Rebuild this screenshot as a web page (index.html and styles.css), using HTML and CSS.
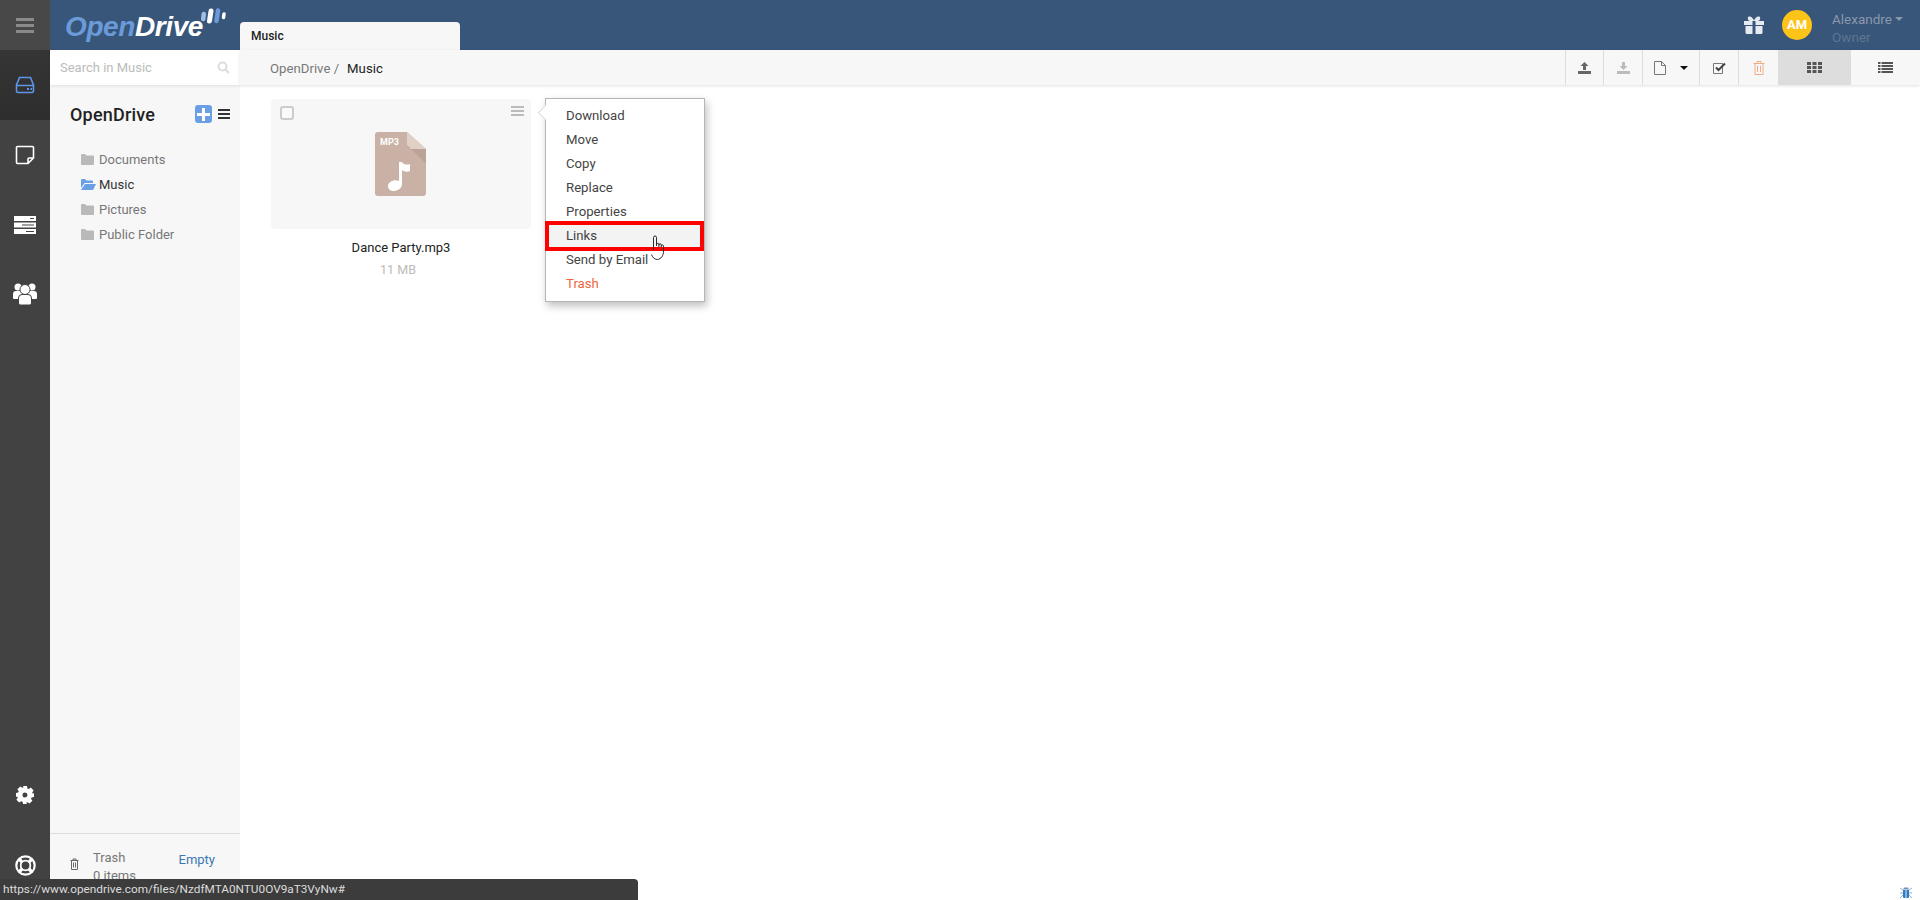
FILE: index.html
```html
<!DOCTYPE html>
<html lang="en">
<head>
    <meta charset="UTF-8">
    <meta name="viewport" content="width=device-width, initial-scale=1.0">
    <title>OpenDrive - Music</title>
    <link rel="stylesheet" href="styles.css">
</head>
<body>
<div class="app">

    <!-- left rail -->
    <nav class="rail">
        <div class="rail-top">
            <svg width="18" height="15" viewBox="0 0 18 15"><path fill="#8a8a8a" d="M0 0h18v3H0zM0 6h18v3H0zM0 12h18v3H0z"/></svg>
        </div>
        <div class="rail-item active">
            <svg width="20" height="18" viewBox="0 0 20 18" fill="none" stroke="#5f95e6" stroke-width="1.6"><path d="M4.500 1.500h11l3 7.500v6a1.500 1.500 0 0 1-1.500 1.500H3a1.500 1.500 0 0 1-1.500-1.500V9zM1.500 9.500h17"/><path stroke-width="2" d="M12 13h2M15.500 13h1.500"/></svg>
        </div>
        <div class="rail-item">
            <svg width="20" height="20" viewBox="0 0 20 20" fill="none" stroke="#fff" stroke-width="1.600"><path d="M13 18.500H2.500a1 1 0 0 1-1-1V2.500a1 1 0 0 1 1-1h15a1 1 0 0 1 1 1V13zM13 18.500V14a1 1 0 0 1 1-1h4.500"/></svg>
        </div>
        <div class="rail-item">
            <svg width="22" height="18" viewBox="0 0 22 18"><path fill="#fff" fill-rule="evenodd" d="M0 0h22v5H0zM16 2v1h4V2zM0 6.500h22v5H0zM8 8.500v1h12v-1zM0 13h22v5H0zM12 15v1h8v-1z"/></svg>
        </div>
        <div class="rail-item users-item">
            <svg width="24" height="22" viewBox="0 0 24 22" fill="#fff">
                <circle cx="5" cy="4" r="3.500"/><circle cx="19" cy="4" r="3.500"/>
                <path d="M0 11a3 3 0 0 1 3-3h18a3 3 0 0 1 3 3v4a1 1 0 0 1-1 1H1a1 1 0 0 1-1-1z"/>
                <circle cx="12" cy="6.500" r="5" stroke="#424242"/>
                <path stroke="#424242" d="M5.500 15a3.500 3.500 0 0 1 3.500-3.500h6a3.500 3.500 0 0 1 3.500 3.500v5a2 2 0 0 1-2 2h-9a2 2 0 0 1-2-2z"/>
            </svg>
        </div>
        <div class="rail-item rail-bottom">
            <svg width="18" height="18" viewBox="0 0 18 18"><path fill="#fff" fill-rule="evenodd" d="M7 0h4l.4 2.400 1.400.6 2-1.400 2.800 2.800-1.400 2 .6 1.400L18 7v4l-2.400.4-.6 1.400 1.400 2-2.800 2.800-2-1.400-1.400.6L11 18H7l-.4-2.200-1.400-.6-2 1.400-2.800-2.800 1.400-2-.6-1.400L0 11V7l2.200-.4.600-1.400-1.400-2 2.800-2.800 2 1.400 1.400-.6zM9 6.500a2.500 2.500 0 1 0 0 5 2.500 2.500 0 0 0 0-5z"/></svg>
        </div>
        <div class="rail-item">
            <svg width="21" height="21" viewBox="0 0 21 21" fill="none" stroke="#fff"><circle cx="10.500" cy="10.500" r="9.200" stroke-width="2.200"/><circle cx="10.500" cy="10.500" r="4.800" stroke-width="1.800"/><path stroke-width="3.200" d="M4 4l3.500 3.500M17 4l-3.500 3.500M4 17l3.500-3.500M17 17l-3.500-3.500"/></svg>
        </div>
    </nav>

    <!-- top bar -->
    <header class="topbar">
        <div class="logo">
            <span class="logo-open">Open</span><span class="logo-drive">Drive</span>
            <svg class="logo-bars" width="26" height="16" viewBox="0 0 26 16" fill="none" stroke-linecap="round">
                <path stroke="#9dbfe6" stroke-width="4.500" d="M3.200 11l.6-5"/>
                <path stroke="#fff" stroke-width="5" d="M9.500 13l1.500-10"/>
                <path stroke="#6a9bd8" stroke-width="4.500" d="M16.500 13L18 2.500"/>
                <path stroke="#fff" stroke-width="3.500" d="M23.500 9.500L24 6"/>
            </svg>
        </div>
        <div class="tab">Music</div>
        <div class="user-area">
            <svg class="gift" width="20" height="18" viewBox="0 0 20 18"><path fill="#e6ebf2" fill-rule="evenodd" d="M0 5h8.500v4H0zM11.500 5H20v4h-8.500zM1.500 10h7v8h-5.500a1.500 1.500 0 0 1-1.500-1.500zM11.500 10h7v6.500a1.500 1.500 0 0 1-1.500 1.500h-5.500zM5 .500C7 0 9 2 10 4.500 11 2 13 0 15 .500c2 .5 1.500 4-1 4.500H6C3.500 4.500 3 1 5 .500z"/></svg>
            <div class="avatar">AM</div>
            <div class="user-name">
                <div class="user-first">Alexandre<span class="caret-small"></span></div>
                <div class="user-role">Owner</div>
            </div>
        </div>
    </header>

    <!-- folder sidebar -->
    <aside class="sidebar">
        <div class="search">
            <span>Search in Music</span>
            <svg width="13" height="13" viewBox="0 0 13 13" fill="none" stroke="#ddd" stroke-width="2"><circle cx="5.500" cy="5.500" r="4"/><path d="M8.500 8.500l3.500 3.500"/></svg>
        </div>
        <div class="side-head">
            <span class="side-title">OpenDrive</span>
            <span class="add-btn">
                <svg width="13" height="13" viewBox="0 0 13 13"><path fill="#fff" d="M5 0h3v5h5v3H8v5H5V8H0V5h5z"/></svg>
            </span>
            <svg width="12" height="10" viewBox="0 0 12 10"><path fill="#333" d="M0 0h12v2H0zM0 4h12v2H0zM0 8h12v2H0z"/></svg>
        </div>
        <ul class="tree">
            <li><svg width="13" height="11" viewBox="0 0 13 11"><path fill="#b9b9b9" d="M0 1a1 1 0 0 1 1-1h3l1.500 1.500H12a1 1 0 0 1 1 1V10a1 1 0 0 1-1 1H1a1 1 0 0 1-1-1z"/></svg>Documents</li>
            <li class="open"><svg width="15" height="11" viewBox="0 0 15 11"><path fill="#6a9fe6" d="M0 1a1 1 0 0 1 1-1h3l1.500 1.500H11a1 1 0 0 1 1 1V4H3.500L0 9zM4 5h11l-3 6H0z"/></svg>Music</li>
            <li><svg width="13" height="11" viewBox="0 0 13 11"><path fill="#b9b9b9" d="M0 1a1 1 0 0 1 1-1h3l1.500 1.500H12a1 1 0 0 1 1 1V10a1 1 0 0 1-1 1H1a1 1 0 0 1-1-1z"/></svg>Pictures</li>
            <li><svg width="13" height="11" viewBox="0 0 13 11"><path fill="#b9b9b9" d="M0 1a1 1 0 0 1 1-1h3l1.500 1.500H12a1 1 0 0 1 1 1V10a1 1 0 0 1-1 1H1a1 1 0 0 1-1-1z"/></svg>Public Folder</li>
        </ul>
        <div class="side-foot">
            <svg width="9" height="12" viewBox="0 0 9 12" fill="none" stroke="#666"><path d="M.5 2.500h8M3 2.500V1h3v1.500M1.500 2.500v9h6v-9M3.500 4.500v5M5.500 4.500v5"/></svg>
            <div class="trash-info">
                <div>Trash</div>
                <div>0 items</div>
            </div>
            <a class="empty-link" href="#">Empty</a>
        </div>
    </aside>

    <!-- file area -->
    <main class="content">
        <div class="toolbar">
            <div class="crumbs"><span>OpenDrive /</span><b>Music</b></div>
            <div class="tools">
                <div class="tool t38"><svg width="13" height="12" viewBox="0 0 13 12"><path fill="#666" d="M6.500 0l4 4H8v4H5V4H2.500zM0 9h13v3H0z"/></svg></div>
                <div class="tool t39"><svg width="13" height="12" viewBox="0 0 13 12"><path fill="#bbb" d="M5 0h3v4h2.500l-4 4-4-4H5zM0 9h13v3H0z"/></svg></div>
                <div class="tool t57">
                    <svg width="12" height="14" viewBox="0 0 12 14" fill="none" stroke="#777"><path d="M.5.500h7l4 4v9H.5zM7.500.5v4h4"/></svg>
                    <span class="caret-black"></span>
                </div>
                <div class="tool t39"><svg width="13" height="12" viewBox="0 0 13 12" fill="none"><path stroke="#777" d="M.5 1.500h9v10h-9z"/><path stroke="#444" stroke-width="2" d="M3 5.500l2.500 2.500L12 1.500"/></svg></div>
                <div class="tool t40"><svg width="12" height="14" viewBox="0 0 12 14" fill="none" stroke="#f5ab84"><path d="M.5 2.500h11M4 2.500V.5h4v2M2 2.500v11h8v-11M4.500 5v6M7.500 5v6"/></svg></div>
                <div class="tool t72 on"><svg width="15" height="11" viewBox="0 0 15 11"><path fill="#555" d="M0 0h4v3H0zM5.500 0h4v3h-4zM11 0h4v3h-4zM0 4h4v3H0zM5.500 4h4v3h-4zM11 4h4v3h-4zM0 8h4v3H0zM5.500 8h4v3h-4zM11 8h4v3h-4z"/></svg></div>
                <div class="tool t70"><svg width="15" height="11" viewBox="0 0 15 11"><path fill="#555" d="M0 0h2.500v2H0zM3.500 0H15v2H3.500zM0 3h2.500v2H0zM3.500 3H15v2H3.500zM0 6h2.500v2H0zM3.500 6H15v2H3.500zM0 9h2.500v2H0zM3.500 9H15v2H3.500z"/></svg></div>
            </div>
        </div>

        <div class="files">
            <div class="file">
                <div class="thumb">
                    <span class="check"></span>
                    <svg class="thumb-menu" width="13" height="10" viewBox="0 0 13 10"><path fill="#bbb" d="M0 0h13v2H0zM0 4h13v2H0zM0 8h13v2H0z"/></svg>
                    <svg class="thumb-icon" width="51" height="64" viewBox="0 0 51 64">
                        <path fill="#c9b1a6" d="M3 0h29l19 17v44a3 3 0 0 1-3 3H3a3 3 0 0 1-3-3V3a3 3 0 0 1 3-3z"/>
                        <path fill="#e0d0c6" d="M32 0l19 17H36a4 4 0 0 1-4-4z"/>
                        <path fill="#bba398" d="M32 13a4 4 0 0 0 4 4h15v15z"/>
                        <path fill="#fff" d="M24 30h3c1 3 7 3 8 2v7c-2 1-6 1-8-1v14c0 4-4 7-8 7s-6-2-6-5c0-4 6-7 11-5z"/>
                        <text class="mp3-label" x="5" y="13">MP3</text>
                    </svg>
                </div>
                <div class="file-name">Dance Party.mp3</div>
                <div class="file-size">11 MB</div>
            </div>
        </div>

        <!-- context menu for the file -->
        <div class="menu">
            <ul>
                <li>Download</li>
                <li>Move</li>
                <li>Copy</li>
                <li>Replace</li>
                <li>Properties</li>
                <li class="hit">Links</li>
                <li>Send by Email</li>
                <li class="danger">Trash</li>
            </ul>
            <svg class="hand" width="15" height="25" viewBox="0 0 15 25" fill="none" stroke="#2a2a2a"><path d="M3.500 15V2.500a1.500 1.500 0 0 1 3 0V11M6.500 9.500a1.200 1.200 0 0 1 2.400 0V12M8.900 10a1.200 1.200 0 0 1 2.400 0V12M11.300 10.500a1.200 1.200 0 0 1 2.200.6V16c0 5-2.500 8-6 8.500-3 0-5-2-6-5"/></svg>
        </div>
    </main>
</div>

<div class="status-url">https://www.opendrive.com/files/NzdfMTA0NTU0OV9aT3VyNw#</div>
<svg class="bug" width="12" height="12" viewBox="0 0 12 12"><path fill="#2f7cc4" d="M3 4h6v7a1 1 0 0 1-1 1H4a1 1 0 0 1-1-1z"/><path fill="#6f93b5" d="M4 1.500h4L9 3.500H3z"/><path stroke="#8fb0d0" d="M0 2l3 2M12 2L9 4M0 7h3M12 7H9M0 12l3-3M12 12L9 9"/><path stroke="#dbe8f3" d="M6 4v8"/></svg>
</body>
</html>
```

FILE: styles.css
```css
* {
    box-sizing: border-box;
}

html, body {
    margin: 0;
    height: 100%;
    overflow: hidden;
}

body {
    font-family: Roboto, "Liberation Sans", sans-serif;
    font-size: 13px;
    color: #333;
    background-color: #fff;
}

.app {
    display: grid;
    grid-template-columns: 50px 190px 1fr;
    grid-template-rows: 50px 1fr;
    height: 900px;
}

/* left rail */
.rail {
    grid-row: 1 / 3;
    display: flex;
    flex-direction: column;
    background-color: #424242;
}

.rail-top {
    height: 50px;
    display: flex;
    align-items: center;
    justify-content: center;
    background-color: #484848;
}

.rail-item {
    height: 70px;
    flex-shrink: 0;
    display: flex;
    align-items: center;
    justify-content: center;
}

.rail-item.active {
    background: linear-gradient(#353535, #2e2e2e);
}

.users-item {
    padding-bottom: 2px;
}

.rail-bottom {
    margin-top: auto;
}

/* top bar */
.topbar {
    grid-column: 2 / 4;
    display: flex;
    align-items: flex-end;
    background-color: #38557a;
}

.logo {
    width: 190px;
    height: 50px;
    display: flex;
    align-items: center;
    padding: 4px 0 0 15px;
    font-family: "Liberation Sans", sans-serif;
    font-size: 28px;
    font-weight: bold;
    font-style: italic;
    letter-spacing: -0.4px;
}

.logo-open {
    color: #6a9bd8;
}

.logo-drive {
    color: #fff;
}

.logo-bars {
    flex-shrink: 0;
    margin: -22px 0 0 -3px;
}

.tab {
    width: 220px;
    height: 28px;
    padding: 7px 11px;
    font-size: 12px;
    font-weight: 500;
    color: #222;
    background-color: #f7f7f7;
    border-radius: 4px 4px 0 0;
}

.user-area {
    margin-left: auto;
    height: 50px;
    display: flex;
    align-items: center;
    width: 176px;
}

.avatar {
    width: 30px;
    height: 30px;
    margin-left: 18px;
    border-radius: 50%;
    background-color: #fcc419;
    color: #fff;
    font-weight: bold;
    font-size: 13px;
    line-height: 30px;
    text-align: center;
}

.user-name {
    margin: 6px 0 0 20px;
    font-size: 13.5px;
    line-height: 18px;
    white-space: nowrap;
}

.user-first {
    color: #8b98aa;
}

.user-role {
    color: #5f7591;
}

.caret-small {
    display: inline-block;
    margin-left: 3px;
    vertical-align: 3px;
    border: 4px solid transparent;
    border-top-color: #8b98aa;
    border-bottom-width: 0;
}

/* sidebar */
.sidebar {
    display: flex;
    flex-direction: column;
    background-color: #f7f7f7;
}

.search {
    height: 35px;
    display: flex;
    align-items: center;
    justify-content: space-between;
    padding: 0 10px;
    background-color: #fff;
    color: #bbb;
    box-shadow: 0 1px 3px rgba(0, 0, 0, 0.1);
}

.side-head {
    display: flex;
    align-items: center;
    margin-top: 20px;
    padding: 0 10px 0 20px;
    height: 18px;
}

.side-title {
    flex: 1;
    font-size: 18px;
    font-weight: 500;
    letter-spacing: 0.2px;
    color: #222;
}

.add-btn {
    width: 17px;
    height: 18px;
    margin-right: 6px;
    display: flex;
    align-items: center;
    justify-content: center;
    border-radius: 3px;
    background-color: #6a9fe6;
}

.tree {
    list-style: none;
    margin: 24px 0 0;
    padding: 0 0 0 31px;
}

.tree li {
    height: 25px;
    display: flex;
    align-items: center;
    color: #777;
}

.tree li svg {
    margin-right: 5px;
}

.tree li.open {
    color: #333;
}

.tree li.open svg {
    margin-right: 3px;
}

.side-foot {
    margin-top: auto;
    height: 67px;
    display: flex;
    align-items: flex-start;
    padding: 15px 25px 0 20px;
    border-top: 1px solid #ddd;
    overflow: hidden;
}

.side-foot svg {
    margin-top: 9px;
}

.trash-info {
    flex: 1;
    margin-left: 14px;
    line-height: 18px;
    color: #777;
}

.empty-link {
    margin-top: 3px;
    color: #3a78b5;
    text-decoration: none;
}

/* main area */
.content {
    position: relative;
}

.toolbar {
    height: 35px;
    display: flex;
    align-items: stretch;
    justify-content: space-between;
    background-color: #f7f7f7;
    box-shadow: 0 1px 3px rgba(0, 0, 0, 0.12);
}

.crumbs {
    display: flex;
    align-items: center;
    padding: 1px 0 0 30px;
    font-size: 13.2px;
    color: #777;
}

.crumbs b {
    margin-left: 8px;
    font-weight: 400;
    color: #222;
}

.tools {
    display: flex;
}

.tool {
    display: flex;
    align-items: center;
    justify-content: center;
    gap: 14px;
    border-left: 1px solid #ddd;
}

.t38 { width: 38px; }
.t39 { width: 39px; }
.t40 { width: 40px; }
.t57 { width: 57px; }
.t70 { width: 70px; }
.t72 { width: 72px; }

.tool.on {
    border-left: 0;
    background-color: #ddd;
}

.caret-black {
    border: 4px solid transparent;
    border-top-color: #111;
    border-bottom-width: 0;
}

.files {
    padding: 14px 0 0 31px;
}

.file {
    width: 260px;
    text-align: center;
}

.thumb {
    position: relative;
    height: 130px;
    padding-top: 33px;
    background-color: #f7f7f7;
    border-radius: 4px;
}

.thumb-icon {
    margin-right: 1px;
}

.check {
    position: absolute;
    left: 9px;
    top: 7px;
    width: 14px;
    height: 14px;
    border: 2px solid #ccc;
    border-radius: 3px;
    background-color: #fafafa;
}

.thumb-menu {
    position: absolute;
    right: 7px;
    top: 7px;
}

.mp3-label {
    font-family: Roboto, sans-serif;
    font-size: 9px;
    font-weight: bold;
    fill: #fff;
}

.file-name {
    margin-top: 11px;
    line-height: 16px;
    color: #222;
}

.file-size {
    margin: 6px 6px 0 0;
    line-height: 16px;
    font-size: 12.5px;
    color: #bbb;
}

/* context menu */
.menu {
    position: absolute;
    left: 305px;
    top: 48px;
    width: 160px;
    height: 204px;
    padding-top: 5px;
    background-color: #fff;
    border: 1px solid #b5b5b5;
    box-shadow: 2px 4px 8px rgba(0, 0, 0, 0.25);
}

.menu::before {
    content: "";
    position: absolute;
    left: -6px;
    top: 8px;
    width: 10px;
    height: 10px;
    background-color: #fff;
    border-left: 1px solid #ddd;
    border-bottom: 1px solid #ddd;
    transform: rotate(45deg);
}

.menu ul {
    list-style: none;
    margin: 0;
    padding: 0;
}

.menu li {
    position: relative;
    height: 24px;
    padding-left: 20px;
    line-height: 24px;
    font-size: 13.2px;
    color: #444;
}

.menu li.hit {
    background-color: #f3f3f3;
}

/* the red frame sits a little outside the row */
.menu li.hit::after {
    content: "";
    position: absolute;
    left: -1px;
    right: 0;
    top: -3px;
    bottom: -3px;
    border: 4px solid #f00;
}

.menu li.danger {
    color: #f0673f;
}

.hand {
    position: absolute;
    left: 104px;
    top: 136px;
}

/* browser status bubble */
.status-url {
    position: absolute;
    left: 0;
    bottom: 0;
    width: 638px;
    height: 21px;
    padding: 0 3px;
    line-height: 21px;
    font-size: 11.8px;
    color: #ddd;
    background-color: #3c3c3c;
    border-top-right-radius: 4px;
}

.bug {
    position: absolute;
    right: 8px;
    bottom: 2px;
}
```
